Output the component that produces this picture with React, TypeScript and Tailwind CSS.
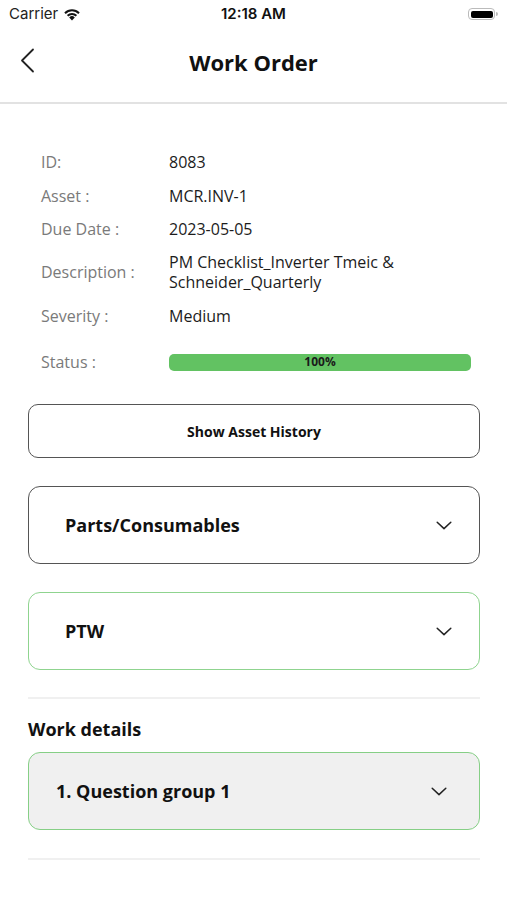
import React from "react";

const Chevron = () => (
  <svg width="16" height="9" viewBox="0 0 16 9" fill="none">
    <path d="M1.2 1.2 L8 7.6 L14.8 1.2" stroke="#222" strokeWidth="1.5" strokeLinecap="round" strokeLinejoin="round" />
  </svg>
);

const Row = ({ label, value, cls = "" }: { label: string; value: React.ReactNode; cls?: string }) => (
  <div className={`flex items-center ${cls}`}>
    <div className="w-[128px] text-[16px] leading-[20px] text-[#7a7a7a]">{label}</div>
    <div className="flex-1 text-[16px] text-[#1c1c1c] leading-[20px]">{value}</div>
  </div>
);

export default function App() {
  return (
    <div className="w-[507px] h-[900px] bg-white overflow-hidden" style={{ fontFamily: "'Open Sans', 'Noto Sans', sans-serif" }}>
      {/* status bar */}
      <div className="h-[28px] flex items-center justify-between px-[9px] relative" style={{ fontFamily: "Inter, 'Open Sans', sans-serif" }}>
        <div className="flex items-center gap-[5px] text-[15px] text-[#222]">
          <span>Carrier</span>
          <svg width="18" height="13" viewBox="0 0 18 13">
            <path d="M9 12.5 L6.2 9.4 A4 4 0 0 1 11.8 9.4 Z" fill="#111" />
            <path d="M3.9 7.1 A7.3 7.3 0 0 1 14.1 7.1 L12.7 8.6 A5.3 5.3 0 0 0 5.3 8.6 Z" fill="#111" />
            <path d="M1.3 4.4 A11 11 0 0 1 16.7 4.4 L15.3 5.9 A9 9 0 0 0 2.7 5.9 Z" fill="#111" />
          </svg>
        </div>
        <div className="absolute left-0 right-0 text-center text-[15px] font-semibold text-[#111] pointer-events-none">12:18 AM</div>
        <div className="flex items-center">
          <div className="w-[27px] h-[12px] rounded-[4px] border border-[#bbb] p-[1.5px]">
            <div className="w-full h-full rounded-[2px] bg-black" />
          </div>
          <div className="w-[2px] h-[4px] bg-[#bbb] rounded-r-sm ml-[1px]" />
        </div>
      </div>

      {/* nav */}
      <div className="h-[76px] flex items-center relative border-b-2 border-[#e2e2e2]">
        <div className="pl-[20px] -mt-[9px]">
          <svg width="16" height="26" viewBox="0 0 16 26" fill="none">
            <path d="M13 1.5 L2 12.5 L13 23.5" stroke="#222" strokeWidth="1.8" strokeLinecap="round" strokeLinejoin="round" />
          </svg>
        </div>
        <div className="absolute left-0 right-0 -mt-[5px] text-center text-[22px] font-bold text-[#111]">Work Order</div>
      </div>

      {/* details */}
      <div className="px-[41px] pt-[48px] flex flex-col">
        <Row label="ID:" value="8083" />
        <Row label="Asset :" value="MCR.INV-1" cls="mt-[14px]" />
        <Row label="Due Date :" value="2023-05-05" cls="mt-[13px]" />
        <Row label="Description :" value={<>PM Checklist_Inverter Tmeic &amp;<br />Schneider_Quarterly</>} cls="mt-[13px]" />
        <Row label="Severity :" value="Medium" cls="mt-[14px]" />
        <div className="flex items-center mt-[26px]">
          <div className="w-[128px] text-[16px] leading-[20px] text-[#7a7a7a]">Status :</div>
          <div className="flex-1 h-[17px] mr-[-5px] rounded-[5px] bg-[#62c262] flex items-center justify-center text-[12px] font-bold text-[#1a1a1a]">100%</div>
        </div>
      </div>

      <div className="px-[28px] pr-[27px] flex flex-col">
        <div className="mt-[32px] h-[54px] rounded-[10px] border border-[#555] flex items-center justify-center text-[14px] font-bold text-[#111]">
          Show Asset History
        </div>

        <div className="mt-[28px] h-[78px] rounded-[12px] border border-[#555] flex items-center justify-between pl-[36px] pr-[27px]">
          <span className="text-[18px] font-bold text-[#111]">Parts/Consumables</span>
          <Chevron />
        </div>

        <div className="mt-[28px] h-[78px] rounded-[12px] border border-[#8fd48f] flex items-center justify-between pl-[36px] pr-[27px]">
          <span className="text-[18px] font-bold text-[#111]">PTW</span>
          <Chevron />
        </div>

        <div className="mt-[27px] h-[2px] bg-[#f0f0f0]" />

        <div className="mt-[17px] text-[18px] font-bold text-[#111]">Work details</div>

        <div className="mt-[9px] h-[78px] rounded-[12px] border-[1.5px] border-[#86cf86] bg-[#f0f0f0] flex items-center justify-between pl-[27px] pr-[32px]">
          <span className="text-[18px] font-bold text-[#111]">1. Question group 1</span>
          <Chevron />
        </div>

        <div className="mt-[28px] h-[2px] bg-[#f0f0f0]" />
      </div>
    </div>
  );
}
